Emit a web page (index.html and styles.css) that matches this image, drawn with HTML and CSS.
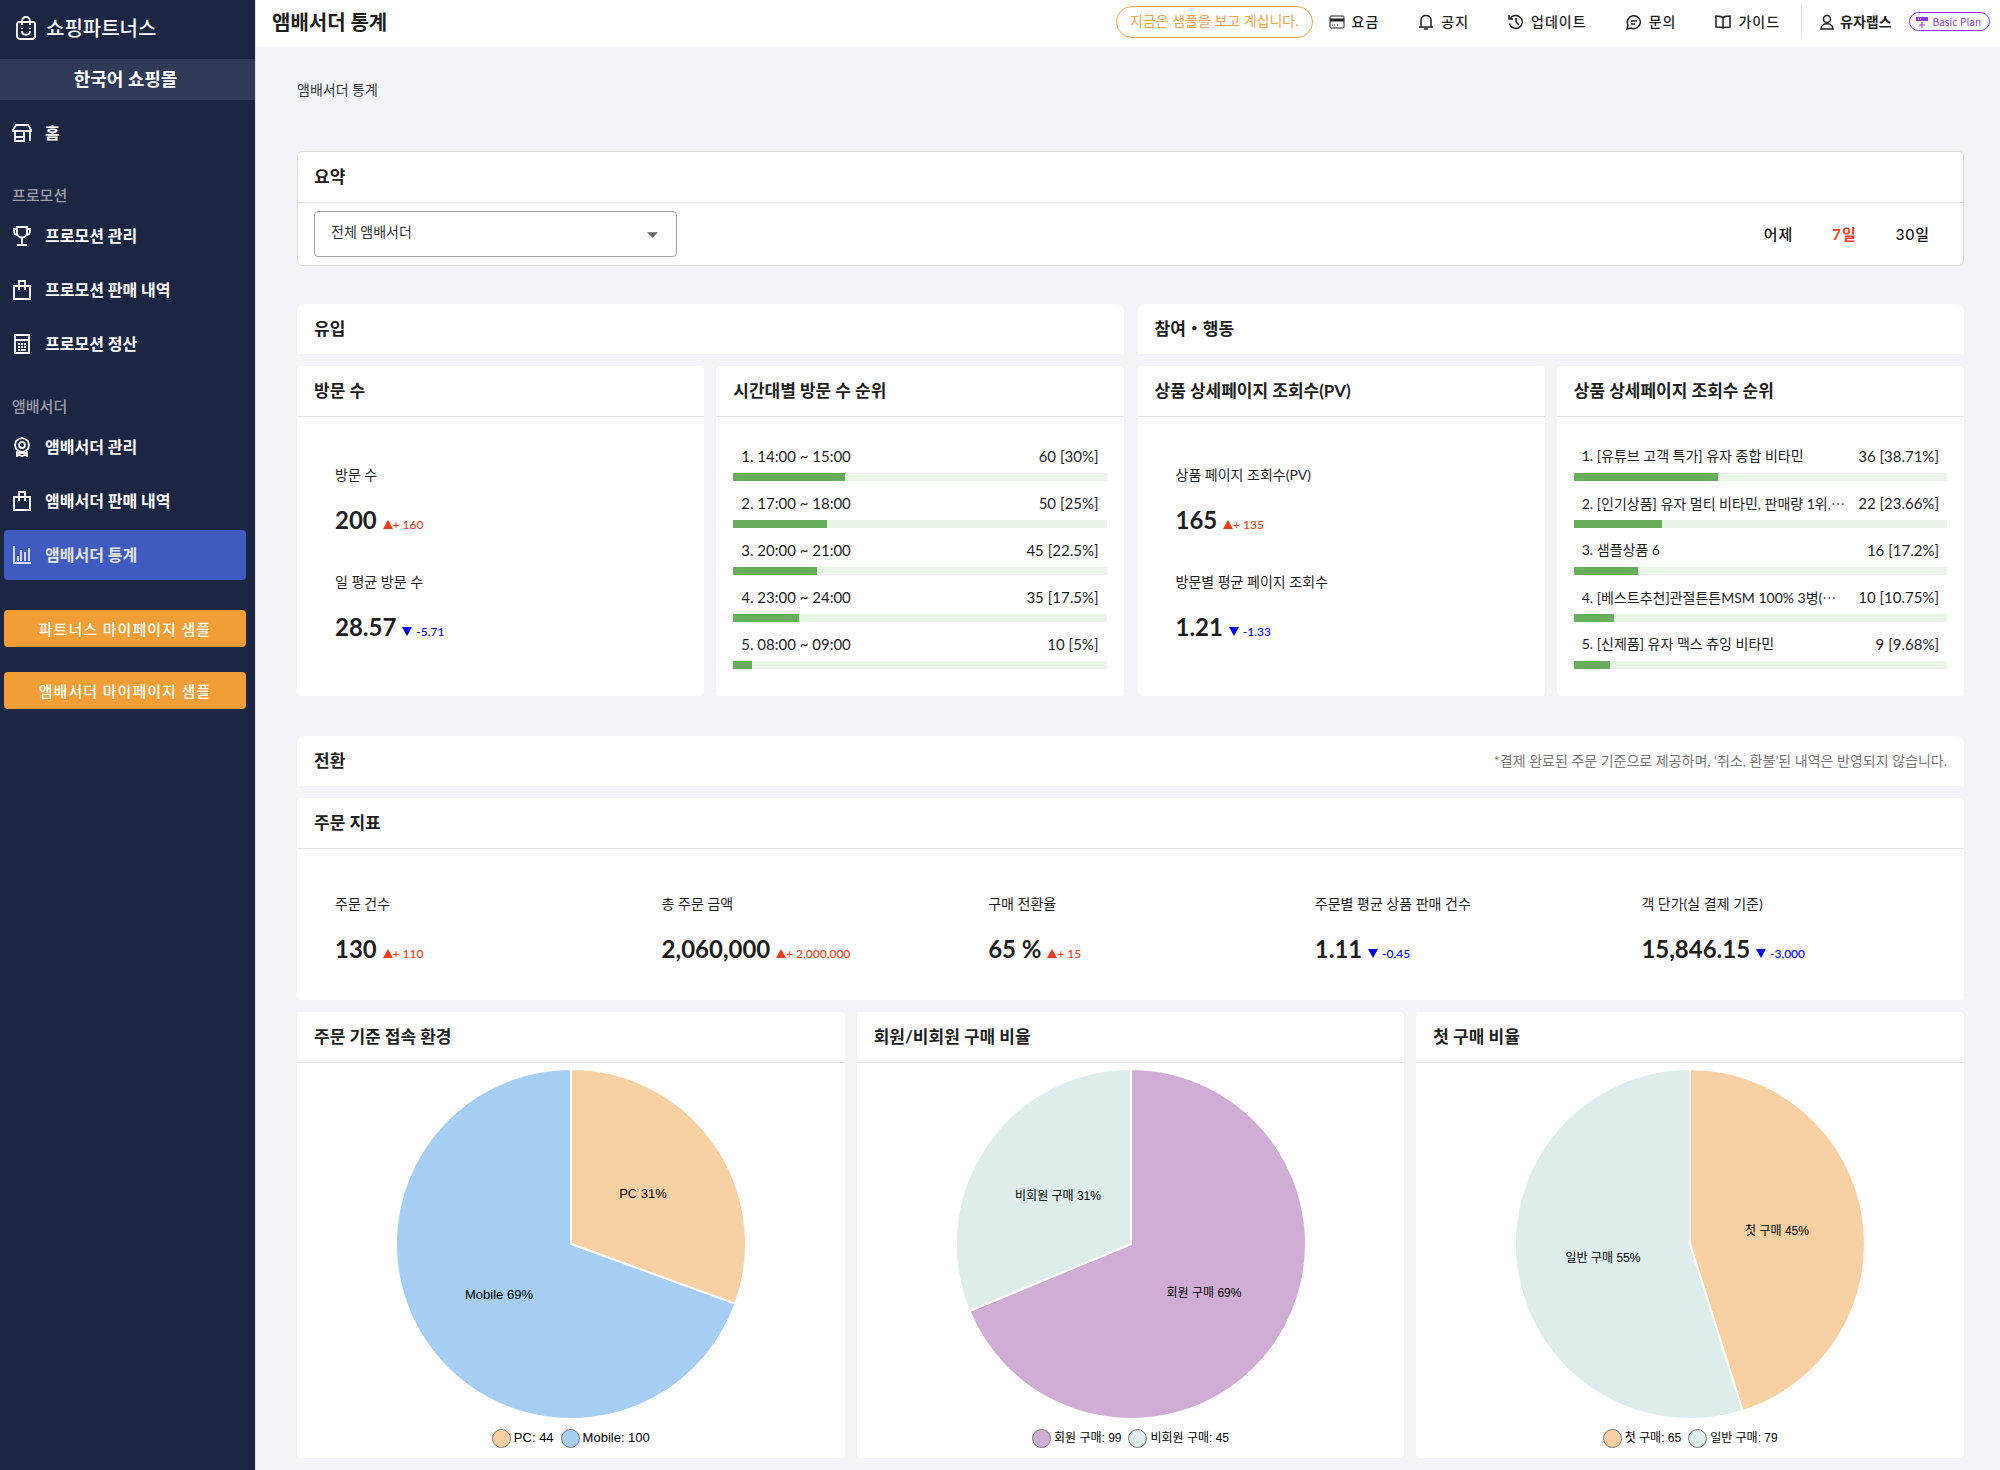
FILE: index.html
```html
<!DOCTYPE html>
<html lang="ko">
<head>
    <meta charset="UTF-8">
    <meta name="viewport" content="width=device-width, initial-scale=1.0">
    <title>앰배서더 통계</title>
    <link rel="stylesheet" href="styles.css">
</head>
<body>
    <div class="app">
        <aside class="sidebar">
            <div class="brand">
                <svg class="brand-icon" viewBox="0 0 20 24"><path d="M3 6h14a2 2 0 0 1 2 2v12a3 3 0 0 1-3 3H4a3 3 0 0 1-3-3V8a2 2 0 0 1 2-2z"/><path d="M6 9V5a4 4 0 0 1 8 0v4"/><path d="M6 12v1M14 12v1M6 15c0 5 8 5 8 0"/></svg>
                <span>쇼핑파트너스</span>
            </div>
            <div class="mall">한국어 쇼핑몰</div>
            <nav class="menu">
                <a href="#" class="menu-item">
                    <svg class="menu-icon" viewBox="0 0 20 20"><path d="M4 2h12l3 5v1H1V7zM3 8v10h9V8M3 14h9M18 8v10"/></svg>
                    <span>홈</span>
                </a>
                <div class="menu-label">프로모션</div>
                <a href="#" class="menu-item">
                    <svg class="menu-icon" viewBox="0 0 20 20"><path d="M5 1h10v6c0 6-10 6-10 0zM5 3H2v2c0 3 1 4 4 4M15 3h3v2c0 3-1 4-4 4M10 12v7M5 19h10"/></svg>
                    <span>프로모션 관리</span>
                </a>
                <a href="#" class="menu-item">
                    <svg class="menu-icon" viewBox="0 0 20 20"><path d="M2 6h16v13H2zM7 10V1h6v9"/></svg>
                    <span>프로모션 판매 내역</span>
                </a>
                <a href="#" class="menu-item">
                    <svg class="menu-icon" viewBox="0 0 20 20"><path d="M3 1h14v18H3zM3 6h14"/><path d="M6 10h2M9 10h2M12 10h2M6 13h2M9 13h2M12 13h2M6 16h2M9 16h2M12 15v2M13 15v2"/></svg>
                    <span>프로모션 정산</span>
                </a>
                <div class="menu-label">앰배서더</div>
                <a href="#" class="menu-item">
                    <svg class="menu-icon" viewBox="0 0 20 20"><path d="M10 1l3 1 3 2 1 4-1 4-3 2-3 1-3-1-3-2-1-4 1-4 3-2z"/><circle cx="10" cy="8" r="3"/><path d="M5 14v5l2-1 3 1 3-1 2 1v-5M6 16h8"/></svg>
                    <span>앰배서더 관리</span>
                </a>
                <a href="#" class="menu-item">
                    <svg class="menu-icon" viewBox="0 0 20 20"><path d="M2 6h16v13H2zM7 10V1h6v9"/></svg>
                    <span>앰배서더 판매 내역</span>
                </a>
                <a href="#" class="menu-item active">
                    <svg class="menu-icon" viewBox="0 0 20 20"><path d="M2 1v17h17M6 16v-5M9 16V5M13 16V7M17 16V3"/></svg>
                    <span>앰배서더 통계</span>
                </a>
            </nav>
            <div class="samples">
                <button type="button" class="sample-btn">파트너스 마이페이지 샘플</button>
                <button type="button" class="sample-btn">앰배서더 마이페이지 샘플</button>
            </div>
        </aside>

        <div class="page">
            <header class="topbar">
                <h1>앰배서더 통계</h1>
                <div class="notice">지금은 샘플을 보고 계십니다.</div>
                <nav class="topnav">
                    <button type="button" class="top-btn">
                        <svg class="top-icon" viewBox="0 0 16 16"><rect x="1" y="2" width="14" height="12" rx="1" stroke-width="1"/><path d="M1 6h14" stroke-width="3"/><path d="M3 11h1M5 11h1M8 11h1" stroke-width="1"/></svg>요금
                    </button>
                    <button type="button" class="top-btn">
                        <svg class="top-icon" viewBox="0 0 16 16"><path d="M1 13h14M3 13V6c0-6 10-6 10 0v7M6 15h4"/></svg>공지
                    </button>
                    <button type="button" class="top-btn">
                        <svg class="top-icon" viewBox="0 0 16 16"><path d="M2 5a6.500 6.500 0 1 1-.5 4.500M1 1v4h4M8 4v4l3 3"/></svg>업데이트
                    </button>
                    <button type="button" class="top-btn">
                        <svg class="top-icon" viewBox="0 0 16 16"><path d="M1 15l1-4a6.500 6.500 0 1 1 3 3zM5 7h6M5 10h4"/></svg>문의
                    </button>
                    <button type="button" class="top-btn">
                        <svg class="top-icon" viewBox="0 0 16 16"><path d="M8 4C7 2 5 2 1 2v11c4 0 6 0 7 1 1-1 3-1 7-1V2c-4 0-6 0-7 2zM8 4v10"/></svg>가이드
                    </button>
                </nav>
                <div class="account">
                    <svg class="top-icon" viewBox="0 0 16 16"><circle cx="8" cy="5" r="3.500"/><path d="M2 15c0-7 12-7 12 0z"/></svg>
                    <span class="user">유자랩스</span>
                    <span class="plan">
                        <svg class="plan-icon" viewBox="0 0 12 12"><path d="M0 1h12v4H0z" fill="#8a38f5"/><path d="M6 6v6M3 9h6" stroke="#8a38f5"/><path d="M2 3h1M4 3h1" stroke="#fff"/></svg>Basic Plan
                    </span>
                </div>
            </header>

            <main class="content">
                <div class="breadcrumb">앰배서더 통계</div>

                <section class="summary">
                    <h2 class="card-title">요약</h2>
                    <div class="filters">
                        <div class="select-wrap">
                            <select class="select" aria-label="앰배서더">
                                <option>전체 앰배서더</option>
                            </select>
                            <svg class="caret" viewBox="0 0 10 5"><path d="M0 0h10L5 5z"/></svg>
                        </div>
                        <div class="ranges">
                            <button type="button" class="range">어제</button>
                            <button type="button" class="range selected">7일</button>
                            <button type="button" class="range">30일</button>
                        </div>
                    </div>
                </section>

                <div class="halves">
                    <section class="half">
                        <div class="section-bar"><h2>유입</h2></div>
                        <div class="cards">
                            <article class="card">
                                <h3 class="card-title">방문 수</h3>
                                <div class="metrics">
                                    <div class="metric">
                                        <div class="metric-label">방문 수</div>
                                        <div class="metric-value">200 <span class="delta up">+ 160</span></div>
                                    </div>
                                    <div class="metric">
                                        <div class="metric-label">일 평균 방문 수</div>
                                        <div class="metric-value">28.57 <span class="delta down">-5.71</span></div>
                                    </div>
                                </div>
                            </article>
                            <article class="card">
                                <h3 class="card-title">시간대별 방문 수 순위</h3>
                                <ol class="ranks">
                                    <li><div class="rank-text"><span>1. 14:00 ~ 15:00</span><span>60 [30%]</span></div><div class="bar"><div class="fill" style="width: 30%"></div></div></li>
                                    <li><div class="rank-text"><span>2. 17:00 ~ 18:00</span><span>50 [25%]</span></div><div class="bar"><div class="fill" style="width: 25%"></div></div></li>
                                    <li><div class="rank-text"><span>3. 20:00 ~ 21:00</span><span>45 [22.5%]</span></div><div class="bar"><div class="fill" style="width: 22.5%"></div></div></li>
                                    <li><div class="rank-text"><span>4. 23:00 ~ 24:00</span><span>35 [17.5%]</span></div><div class="bar"><div class="fill" style="width: 17.5%"></div></div></li>
                                    <li><div class="rank-text"><span>5. 08:00 ~ 09:00</span><span>10 [5%]</span></div><div class="bar"><div class="fill" style="width: 5%"></div></div></li>
                                </ol>
                            </article>
                        </div>
                    </section>

                    <section class="half">
                        <div class="section-bar"><h2>참여・행동</h2></div>
                        <div class="cards">
                            <article class="card">
                                <h3 class="card-title">상품 상세페이지 조회수(PV)</h3>
                                <div class="metrics">
                                    <div class="metric">
                                        <div class="metric-label">상품 페이지 조회수(PV)</div>
                                        <div class="metric-value">165 <span class="delta up">+ 135</span></div>
                                    </div>
                                    <div class="metric">
                                        <div class="metric-label">방문별 평균 페이지 조회수</div>
                                        <div class="metric-value">1.21 <span class="delta down">-1.33</span></div>
                                    </div>
                                </div>
                            </article>
                            <article class="card">
                                <h3 class="card-title">상품 상세페이지 조회수 순위</h3>
                                <ol class="ranks">
                                    <li><div class="rank-text"><span class="product">1. [유튜브 고객 특가] 유자 종합 비타민</span><span>36 [38.71%]</span></div><div class="bar"><div class="fill" style="width: 38.71%"></div></div></li>
                                    <li><div class="rank-text"><span class="product">2. [인기상품] 유자 멀티 비타민, 판매량 1위,<span class="dots">…</span></span><span>22 [23.66%]</span></div><div class="bar"><div class="fill" style="width: 23.66%"></div></div></li>
                                    <li><div class="rank-text"><span class="product">3. 샘플상품 6</span><span>16 [17.2%]</span></div><div class="bar"><div class="fill" style="width: 17.2%"></div></div></li>
                                    <li><div class="rank-text"><span class="product">4. [베스트추천]관절튼튼MSM 100% 3병(<span class="dots">…</span></span><span>10 [10.75%]</span></div><div class="bar"><div class="fill" style="width: 10.75%"></div></div></li>
                                    <li><div class="rank-text"><span class="product">5. [신제품] 유자 맥스 츄잉 비타민</span><span>9 [9.68%]</span></div><div class="bar"><div class="fill" style="width: 9.68%"></div></div></li>
                                </ol>
                            </article>
                        </div>
                    </section>
                </div>

                <section class="conversion">
                    <div class="section-bar">
                        <h2>전환</h2>
                        <p class="hint">*결제 완료된 주문 기준으로 제공하며, ‘취소, 환불’된 내역은 반영되지 않습니다.</p>
                    </div>
                    <article class="card">
                        <h3 class="card-title">주문 지표</h3>
                        <div class="order-metrics">
                            <div class="metric">
                                <div class="metric-label">주문 건수</div>
                                <div class="metric-value">130 <span class="delta up">+ 110</span></div>
                            </div>
                            <div class="metric">
                                <div class="metric-label">총 주문 금액</div>
                                <div class="metric-value">2,060,000 <span class="delta up">+ 2,000,000</span></div>
                            </div>
                            <div class="metric">
                                <div class="metric-label">구매 전환율</div>
                                <div class="metric-value">65 % <span class="delta up">+ 15</span></div>
                            </div>
                            <div class="metric">
                                <div class="metric-label">주문별 평균 상품 판매 건수</div>
                                <div class="metric-value">1.11 <span class="delta down">-0.45</span></div>
                            </div>
                            <div class="metric">
                                <div class="metric-label">객 단가(실 결제 기준)</div>
                                <div class="metric-value">15,846.15 <span class="delta down">-3,000</span></div>
                            </div>
                        </div>
                    </article>
                    <div class="cards">
                        <article class="card">
                            <h3 class="card-title">주문 기준 접속 환경</h3>
                            <div class="chart">
                                <svg class="pie" viewBox="-176 -176 352 352">
                                    <path class="orange" d="M0 0V-175A175 175 0 0 1 164.4 59.9z"/>
                                    <path class="blue" d="M0 0L164.4 59.9A175 175 0 1 1 0 -175z"/>
                                    <text x="72" y="-46">PC 31%</text>
                                    <text x="-72" y="55">Mobile 69%</text>
                                </svg>
                                <div class="legend">
                                    <span class="key"><i class="dot orange"></i>PC: 44</span>
                                    <span class="key"><i class="dot blue"></i>Mobile: 100</span>
                                </div>
                            </div>
                        </article>
                        <article class="card">
                            <h3 class="card-title">회원/비회원 구매 비율</h3>
                            <div class="chart chart-ko">
                                <svg class="pie" viewBox="-176 -176 352 352">
                                    <path class="purple" d="M0 0V-175A175 175 0 1 1 -161.7 67z"/>
                                    <path class="mint" d="M0 0L-161.7 67A175 175 0 0 1 0 -175z"/>
                                    <text x="73" y="53">회원 구매 69%</text>
                                    <text x="-73" y="-44">비회원 구매 31%</text>
                                </svg>
                                <div class="legend">
                                    <span class="key"><i class="dot purple"></i>회원 구매: 99</span>
                                    <span class="key"><i class="dot mint"></i>비회원 구매: 45</span>
                                </div>
                            </div>
                        </article>
                        <article class="card">
                            <h3 class="card-title">첫 구매 비율</h3>
                            <div class="chart chart-ko">
                                <svg class="pie" viewBox="-176 -176 352 352">
                                    <path class="orange" d="M0 0V-175A175 175 0 0 1 52.6 166.900z"/>
                                    <path class="mint" d="M0 0L52.6 166.900A175 175 0 1 1 0 -175z"/>
                                    <text x="87" y="-9">첫 구매 45%</text>
                                    <text x="-87" y="18">일반 구매 55%</text>
                                </svg>
                                <div class="legend">
                                    <span class="key"><i class="dot orange"></i>첫 구매: 65</span>
                                    <span class="key"><i class="dot mint"></i>일반 구매: 79</span>
                                </div>
                            </div>
                        </article>
                    </div>
                </section>
            </main>
        </div>
    </div>
</body>
</html>
```

FILE: styles.css
```css
* {
    box-sizing: border-box;
}

body {
    margin: 0;
    background-color: #f3f4f9;
    color: #1e1e1e;
    font-family: Lato, "Noto Sans CJK KR", sans-serif;
    font-size: 14px;
    line-height: 20px;
}

h1, h2, h3, p, ol {
    margin: 0;
    padding: 0;
}

button {
    border: none;
    background: none;
    padding: 0;
    color: inherit;
    font: inherit;
    cursor: pointer;
}

svg {
    flex: none;
    fill: none;
}

.app {
    display: flex;
    min-height: 100vh;
}

/* Sidebar */
.sidebar {
    flex: none;
    width: 256px;
    background-color: #1c2541;
    border-right: 1px solid #e0e0e0;
    color: #fff;
}

.brand {
    display: flex;
    align-items: center;
    gap: 10px;
    height: 59px;
    padding: 0 16px 4px;
    font-size: 20px;
    font-weight: 500;
}

.brand-icon {
    width: 20px;
    height: 24px;
    stroke: #fff;
    stroke-width: 1.8;
}

.mall {
    height: 41px;
    background-color: #303956;
    font-size: 18px;
    font-weight: bold;
    line-height: 41px;
    text-align: center;
    padding-right: 4px;
}

.menu {
    display: flex;
    flex-direction: column;
    gap: 4px;
    padding: 8px 9px 0 4px;
}

.menu-item {
    display: flex;
    align-items: center;
    gap: 13px;
    height: 50px;
    padding: 0 8px;
    border-radius: 4px;
    color: #fff;
    font-size: 16px;
    font-weight: bold;
    text-decoration: none;
}

.menu-item.active {
    background-color: #3f5bc0;
    color: #e4e4e8;
}

.menu-icon {
    width: 20px;
    height: 20px;
    stroke: currentColor;
    stroke-width: 1.8;
}

.menu-label {
    padding: 21px 8px 0;
    color: #9a9ea9;
    font-size: 15px;
    line-height: 24px;
    font-weight: 500;
}

.samples {
    display: flex;
    flex-direction: column;
    gap: 25px;
    padding: 30px 9px 0 4px;
}

.sample-btn {
    height: 37px;
    border-radius: 4px;
    background-color: #f09e35;
    color: #fff;
    font-size: 15px;
    font-weight: 500;
    letter-spacing: 1px;
}

/* Top bar */
.page {
    flex: 1;
    min-width: 0;
}

.topbar {
    display: flex;
    align-items: center;
    height: 47px;
    padding: 0 10px 4px 16px;
    background-color: #fff;
}

.topbar h1 {
    font-size: 20px;
    margin-right: auto;
}

.notice {
    height: 32px;
    padding: 0 13px;
    border: 1px solid #f0a64a;
    border-radius: 16px;
    color: #f0a64a;
    line-height: 28px;
}

.topnav {
    display: flex;
    gap: 39px;
    padding: 0 21px 0 16px;
    border-right: 1px solid #e6e6e6;
}

.top-btn {
    display: flex;
    align-items: center;
    gap: 7px;
    height: 35px;
    font-weight: 500;
    letter-spacing: 1px;
}

.top-icon {
    width: 16px;
    height: 16px;
    stroke: #1e1e1e;
    stroke-width: 1.5;
}

.account {
    display: flex;
    align-items: center;
    gap: 5px;
    padding-left: 17px;
}

.user {
    font-weight: bold;
}

.plan {
    display: flex;
    align-items: center;
    gap: 5px;
    height: 19px;
    margin-left: 12px;
    padding: 0 8px 0 6px;
    border: 1px solid #8a38f5;
    border-radius: 10px;
    color: #8a38f5;
    font-family: "Noto Sans CJK KR", sans-serif;
    font-size: 10px;
    line-height: 17px;
}

.plan-icon {
    width: 12px;
    height: 12px;
}

/* Content */
.content {
    padding: 33px 36px 11px 41px;
}

.breadcrumb {
    color: #33353d;
}

.summary {
    margin-top: 51px;
    border: 1px solid #dcdcdc;
    border-radius: 5px;
    background-color: #fff;
}

.card-title {
    height: 51px;
    padding: 0 17px;
    border-bottom: 1px solid #e4e4e4;
    font-size: 17px;
    line-height: 50px;
}

.summary .card-title {
    padding: 0 16px;
}

.filters {
    display: flex;
    align-items: center;
    justify-content: space-between;
    padding: 8px 33px 8px 16px;
}

.select-wrap {
    position: relative;
    width: 363px;
}

.select {
    width: 100%;
    height: 46px;
    padding: 0 16px 4px;
    border: 1px solid #a4a4a4;
    border-radius: 4px;
    background-color: #fff;
    color: #333;
    font: inherit;
    appearance: none;
}

.caret {
    position: absolute;
    right: 19px;
    top: 21px;
    width: 11px;
    height: 6px;
    fill: #666;
    pointer-events: none;
}

.ranges {
    display: flex;
    gap: 39px;
}

.range {
    color: #111;
    font-size: 15px;
    font-weight: 500;
    letter-spacing: 1px;
}

.range.selected {
    color: #f03a1f;
    font-weight: bold;
}

.halves {
    display: flex;
    gap: 14px;
    margin-top: 38px;
}

.half {
    flex: 1;
    min-width: 0;
}

.section-bar {
    display: flex;
    align-items: center;
    justify-content: space-between;
    height: 50px;
    padding: 0 17px;
    border-radius: 8px 8px 0 0;
    background-color: #fff;
}

.section-bar h2 {
    font-size: 17px;
}

.hint {
    color: #777;
}

.cards {
    display: flex;
    gap: 12px;
    margin-top: 12px;
}

.card {
    flex: 1;
    min-width: 0;
    border-radius: 4px;
    background-color: #fff;
}

.metrics {
    display: flex;
    flex-direction: column;
    gap: 32px;
    padding: 46px 38px 50px;
}

.metric-label {
    line-height: 24px;
    margin-bottom: 15px;
}

.metric-value {
    font-size: 24px;
    font-weight: bold;
    line-height: 36px;
    white-space: nowrap;
}

.delta {
    font-size: 12px;
    font-weight: 500;
    line-height: 12px;
}

.delta::before {
    content: "";
    display: inline-block;
    border: 5px solid transparent;
}

.up {
    color: #f03a1f;
}

.up::before {
    border-top: none;
    border-bottom: 9px solid #f03a1f;
}

.down {
    color: #0000ff;
}

.down::before {
    border-bottom: none;
    border-top: 9px solid #0000ff;
    margin-right: 4px;
}

.ranks {
    padding: 21px 17px 23px;
    list-style: none;
}

.ranks li {
    padding-bottom: 4px;
}

.rank-text {
    display: flex;
    justify-content: space-between;
    height: 35px;
    padding: 8px 8px 7px;
    font-size: 15px;
    white-space: nowrap;
}

.product {
    font-size: 14px;
}

.dots {
    font-family: "Noto Sans CJK KR", sans-serif;
}

.bar {
    height: 8px;
    background-color: #ebf4e9;
}

.fill {
    height: 100%;
    background-color: #68ad5b;
}

.conversion {
    margin-top: 40px;
}

.conversion > .card {
    margin-top: 12px;
}

.order-metrics {
    display: grid;
    grid-template-columns: repeat(5, 1fr);
    padding: 43px 17px 33px;
}

.order-metrics .metric {
    padding-left: 21px;
}

/* Pie charts */
.chart {
    display: flex;
    flex-direction: column;
    align-items: center;
    padding: 5px 0 10px;
    color: #000;
    font-family: "Liberation Sans", "Noto Sans CJK KR", sans-serif;
    font-size: 13px;
}

.chart-ko {
    font-size: 12px;
}

.pie {
    width: 352px;
    height: 352px;
    stroke: #fff;
    stroke-width: 2;
}

.pie text {
    fill: #000;
    stroke: none;
    text-anchor: middle;
}

.legend {
    display: flex;
    gap: 7px;
    margin-top: 8px;
}

.key {
    display: flex;
    align-items: center;
    gap: 3px;
}

.dot {
    width: 19px;
    height: 19px;
    border: 1px solid #777;
    border-radius: 50%;
}

.orange {
    fill: #f7d1a3;
    background-color: #f7d1a3;
}

.blue {
    fill: #a6cdf2;
    background-color: #a6cdf2;
}

.purple {
    fill: #cfadd4;
    background-color: #cfadd4;
}

.mint {
    fill: #deeceb;
    background-color: #deeceb;
}
```
